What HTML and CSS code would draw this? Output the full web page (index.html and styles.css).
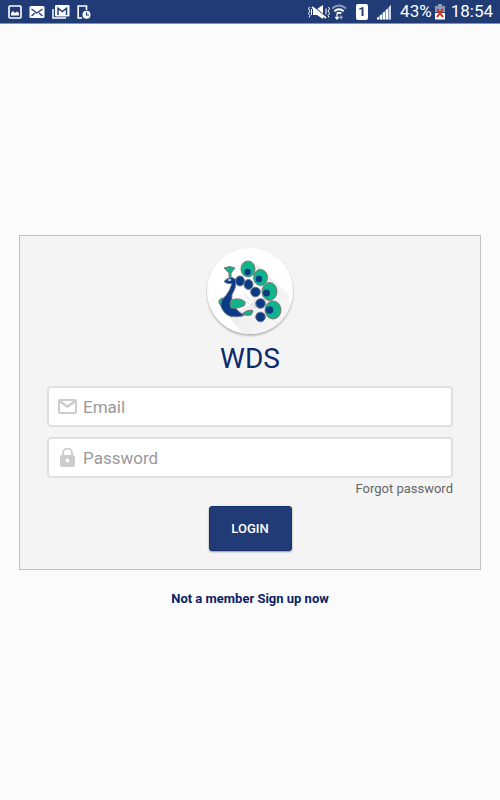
FILE: index.html
```
<!DOCTYPE html>
<html lang="en">
<head>
    <meta charset="UTF-8">
    <meta name="viewport" content="width=device-width, initial-scale=1.0">
    <title>WDS</title>
    <link rel="stylesheet" href="styles.css">
</head>
<body>
    <header class="status-bar">
        <div class="notifications">
            <svg width="14" height="14" viewBox="0 0 14 14">
                <rect x="1" y="1" width="12" height="12" rx="1" fill="none" stroke="#fff" stroke-width="1.6"/>
                <path d="M3 10.5V8l2-2 2 2 2-1.5 2 1.5v2.5z" fill="#fff"/>
            </svg>
            <svg width="16" height="14" viewBox="0 0 16 14">
                <rect x="0.5" y="1" width="15" height="12" rx="1.5" fill="#fff"/>
                <path d="M2.5 4L8 8l5.5-4M2.5 11L6 8M13.5 11L10 8" fill="none" stroke="#213b76" stroke-width="1.3"/>
            </svg>
            <svg width="18" height="14" viewBox="0 0 18 14">
                <path d="M1 4v9h13" fill="none" stroke="#fff" stroke-width="1.5"/>
                <rect x="3" y="0" width="14.5" height="11.5" rx="1" fill="#fff"/>
                <path d="M6 10V3.2l4.3 3.4 4.2-3.4V10" fill="none" stroke="#213b76" stroke-width="1.5"/>
            </svg>
            <svg width="14" height="14" viewBox="0 0 14 14">
                <path d="M5 13H1.2V1h8.3v4" fill="none" stroke="#fff" stroke-width="1.6"/>
                <circle cx="9.5" cy="9.8" r="4" fill="#fff"/>
                <path d="M9.5 7.3V10H12" fill="none" stroke="#213b76" stroke-width="1.2"/>
            </svg>
        </div>
        <div class="system">
            <svg width="22" height="16" viewBox="0 0 22 16">
                <path d="M5 5h4l6-4v14l-6-4H5z" fill="#fff"/>
                <path d="M5 2l13 11" stroke="#213b76" stroke-width="1.2"/>
                <path d="M4 3l14 11" stroke="#fff" stroke-width="1.8"/>
                <path d="M1.5 3l-1 2L2 7 .5 9.5l1.5 2-1 2M3.5 5v6M18 4.5v6M20.5 3l1 2L20 7l1.500 2.5-1.5 2 1 2" fill="none" stroke="#fff"/>
            </svg>
            <svg class="wifi" width="16" height="16" viewBox="0 0 16 16">
                <path d="M0 4.500q7-6 14 0" fill="none" stroke="#8d9cbf" stroke-width="1.8"/>
                <path d="M2.3 7.3q4.700-4 9.400 0M4.700 9.600q2.300-1.800 4.600 0" fill="none" stroke="#fff" stroke-width="1.9"/>
                <path d="M5 10v4.500M3.300 13L5 15l1.700-2" fill="none" stroke="#fff" stroke-width="1.2"/>
                <path d="M9 15.500V12M7.300 14L9 12l1.700 2" fill="none" stroke="#8d9cbf" stroke-width="1.2"/>
            </svg>
            <span class="sim">1</span>
            <svg class="signal" width="16" height="16" viewBox="0 0 16 16">
                <path d="M1 15.5V14L15 1v14.5z" fill="#8d9cbf"/>
                <path d="M1 13.500h2v2H1zM4 11h2v4.500H4zM7 8.500h2v7H7zM10 5.500h2v10h-2z" fill="#fff"/>
                <path d="M13 3l2-2v14.5h-2z" fill="#d3d9e5"/>
            </svg>
            <span>43%</span>
            <svg class="battery" width="10" height="16" viewBox="0 0 10 16">
                <path d="M3 0h4v2h3v6H0V2h3z" fill="#8c98b5"/>
                <path d="M0 9h10v6.5H0z" fill="#fff"/>
                <path d="M2 5l6 8M8 5l-6 8" stroke="#d92b16" stroke-width="2"/>
            </svg>
            <span>18:54</span>
        </div>
    </header>

    <main class="page">
        <form class="card">
            <svg class="logo" width="88" height="90" viewBox="0 0 88 90">
                <defs>
                    <filter id="shadow" x="-10%" y="-10%" width="120%" height="120%">
                        <feDropShadow dx="0" dy="1.5" stdDeviation="1" flood-opacity="0.35"/>
                    </filter>
                    <linearGradient id="fade" x1="0" y1="0" x2="1" y2="1">
                        <stop offset="0" stop-color="#e6e6e6"/>
                        <stop offset="1" stop-color="#fbfbfb"/>
                    </linearGradient>
                    <clipPath id="disc"><circle cx="44" cy="43" r="43"/></clipPath>
                </defs>
                <circle cx="44" cy="43" r="43" fill="#fff" filter="url(#shadow)"/>
                <path d="M50 15L82 47 90 80 44 95 23 69 55 50z" fill="url(#fade)" clip-path="url(#disc)"/>
                <path d="M50 60L37 52M50 60L38 45M50 60L43 40M50 60L48 43" stroke="#ddd" stroke-width="1"/>
                <g fill="#10b38a" stroke="#777" stroke-width="1">
                    <ellipse cx="42" cy="21" rx="7" ry="8"/>
                    <ellipse cx="54.5" cy="29.5" rx="7" ry="8"/>
                    <ellipse cx="63.5" cy="43.5" rx="7.5" ry="9"/>
                    <ellipse cx="67" cy="62" rx="8" ry="9"/>
                    <path d="M18 20q6-3 11 0l-4 5v4h-2v-4z"/>
                    <path d="M17 50q-5 1-4 5 2 4 5 4z"/>
                    <path d="M36 66q4-4 10-4l1 1-2 4q-5 1-9-1z"/>
                </g>
                <g fill="#0b3b84" stroke="#68758f" stroke-width="1">
                    <path d="M18 33.500q3-4 8-4 4 1 4 4 0 7-4 13-1 4 1 9 2 6 11 12-6 2-13 1-7-2-10-10-1-6 5-11 4-5 6-12-5 1-8-2z"/>
                    <ellipse cx="34" cy="33" rx="4.5" ry="5"/>
                    <ellipse cx="42.5" cy="36.5" rx="4.5" ry="5"/>
                    <circle cx="49.5" cy="44" r="4.8"/>
                    <circle cx="54.5" cy="55.5" r="4.8"/>
                    <circle cx="54.5" cy="69" r="4.8"/>
                </g>
                <path d="M25 52q9-3 14 2 1 4-4 5-5 2-10 1-2-4 0-8z" fill="#10b38a" stroke="#777" stroke-width="1"/>
                <g fill="#0b3b84">
                    <circle cx="41.5" cy="24" r="3.2"/>
                    <circle cx="53" cy="31" r="3.2"/>
                    <circle cx="60.5" cy="45" r="3.5"/>
                    <circle cx="63.5" cy="62" r="3.8"/>
                </g>
                <ellipse cx="23.5" cy="32" rx="2" ry="1" fill="#b8cbe5"/>
            </svg>
            <h1>WDS</h1>
            <label class="field">
                <svg width="20" height="20" viewBox="0 0 20 20">
                    <rect x="2" y="3" width="17" height="13" rx="1" fill="none" stroke="#ccc" stroke-width="2"/>
                    <path d="M3 4.500l7.500 5 7.500-5" fill="none" stroke="#ccc" stroke-width="2.4"/>
                </svg>
                <input type="email" placeholder="Email" aria-label="Email">
            </label>
            <label class="field">
                <svg width="20" height="20" viewBox="0 0 20 20">
                    <path d="M6 8V5a4.500 4.500 0 0 1 9 0v3" fill="none" stroke="#ccc" stroke-width="1.8"/>
                    <rect x="3" y="7" width="15" height="12" rx="2" fill="#ccc"/>
                    <circle cx="10.5" cy="12.5" r="2" fill="#fff"/>
                </svg>
                <input type="password" placeholder="Password" aria-label="Password">
            </label>
            <a class="forgot" href="#">Forgot password</a>
            <button type="submit">LOGIN</button>
        </form>
        <a class="signup" href="#">Not a member Sign up now</a>
    </main>
</body>
</html>
```

FILE: styles.css
```
* {
    box-sizing: border-box;
}

body {
    margin: 0;
    min-height: 100vh;
    display: flex;
    flex-direction: column;
    background-color: #fbfbfb;
    font-family: Roboto, "Liberation Sans", sans-serif;
}

svg {
    display: block;
    flex: none;
}

a {
    text-decoration: none;
}

.status-bar {
    display: flex;
    justify-content: space-between;
    align-items: center;
    height: 24px;
    padding: 0 7px 0 8px;
    background-color: #213b76;
    border-bottom: 1px solid #8593b3;
    color: #fff;
    font-size: 17px;
    line-height: 23px;
}

.notifications {
    display: flex;
    gap: 7px;
}

.system {
    display: flex;
    align-items: center;
}

.wifi {
    margin-left: 2px;
}

.sim {
    width: 12px;
    height: 16px;
    margin: 0 8px;
    border-radius: 2px;
    background-color: #fff;
    color: #213b76;
    font-size: 13px;
    font-weight: bold;
    line-height: 16px;
    text-align: center;
}

.signal {
    margin-right: 8px;
}

.battery {
    margin: 0 6px 0 3px;
}

.page {
    flex: 1;
    display: flex;
    flex-direction: column;
    justify-content: center;
    align-items: center;
    padding: 19px 19px 0;
}

.card {
    display: flex;
    flex-direction: column;
    align-items: center;
    width: 100%;
    padding: 12px 27px 18px;
    border: 1px solid #c2c2c2;
    background-color: #f4f4f4;
}

h1 {
    margin: 4px 0 10px;
    color: #0b2a70;
    font-size: 28px;
    font-weight: normal;
    line-height: 34px;
}

.field {
    display: flex;
    align-items: center;
    gap: 6px;
    width: 100%;
    height: 41px;
    margin-bottom: 10px;
    padding: 0 8px;
    border: 2px solid #e0e0e0;
    border-radius: 4px;
    background-color: #fff;
}

.field input {
    flex: 1;
    min-width: 0;
    padding: 0;
    border: 0;
    outline: 0;
    background: none;
    font-family: inherit;
    font-size: 17px;
}

.field input::placeholder {
    color: #999;
}

.forgot {
    align-self: flex-end;
    margin-top: -8px;
    color: #666;
    font-size: 13px;
    line-height: 18px;
}

button {
    width: 83px;
    height: 45px;
    margin-top: 8px;
    border: 1px solid #14306e;
    border-radius: 3px;
    background-color: #213b76;
    box-shadow: 0 1px 2px rgba(0, 0, 0, 0.4);
    color: #fff;
    font-family: inherit;
    font-size: 13px;
    font-weight: 500;
}

.signup {
    margin-top: 20px;
    color: #0b2265;
    font-size: 13px;
    font-weight: bold;
    line-height: 18px;
}
```
